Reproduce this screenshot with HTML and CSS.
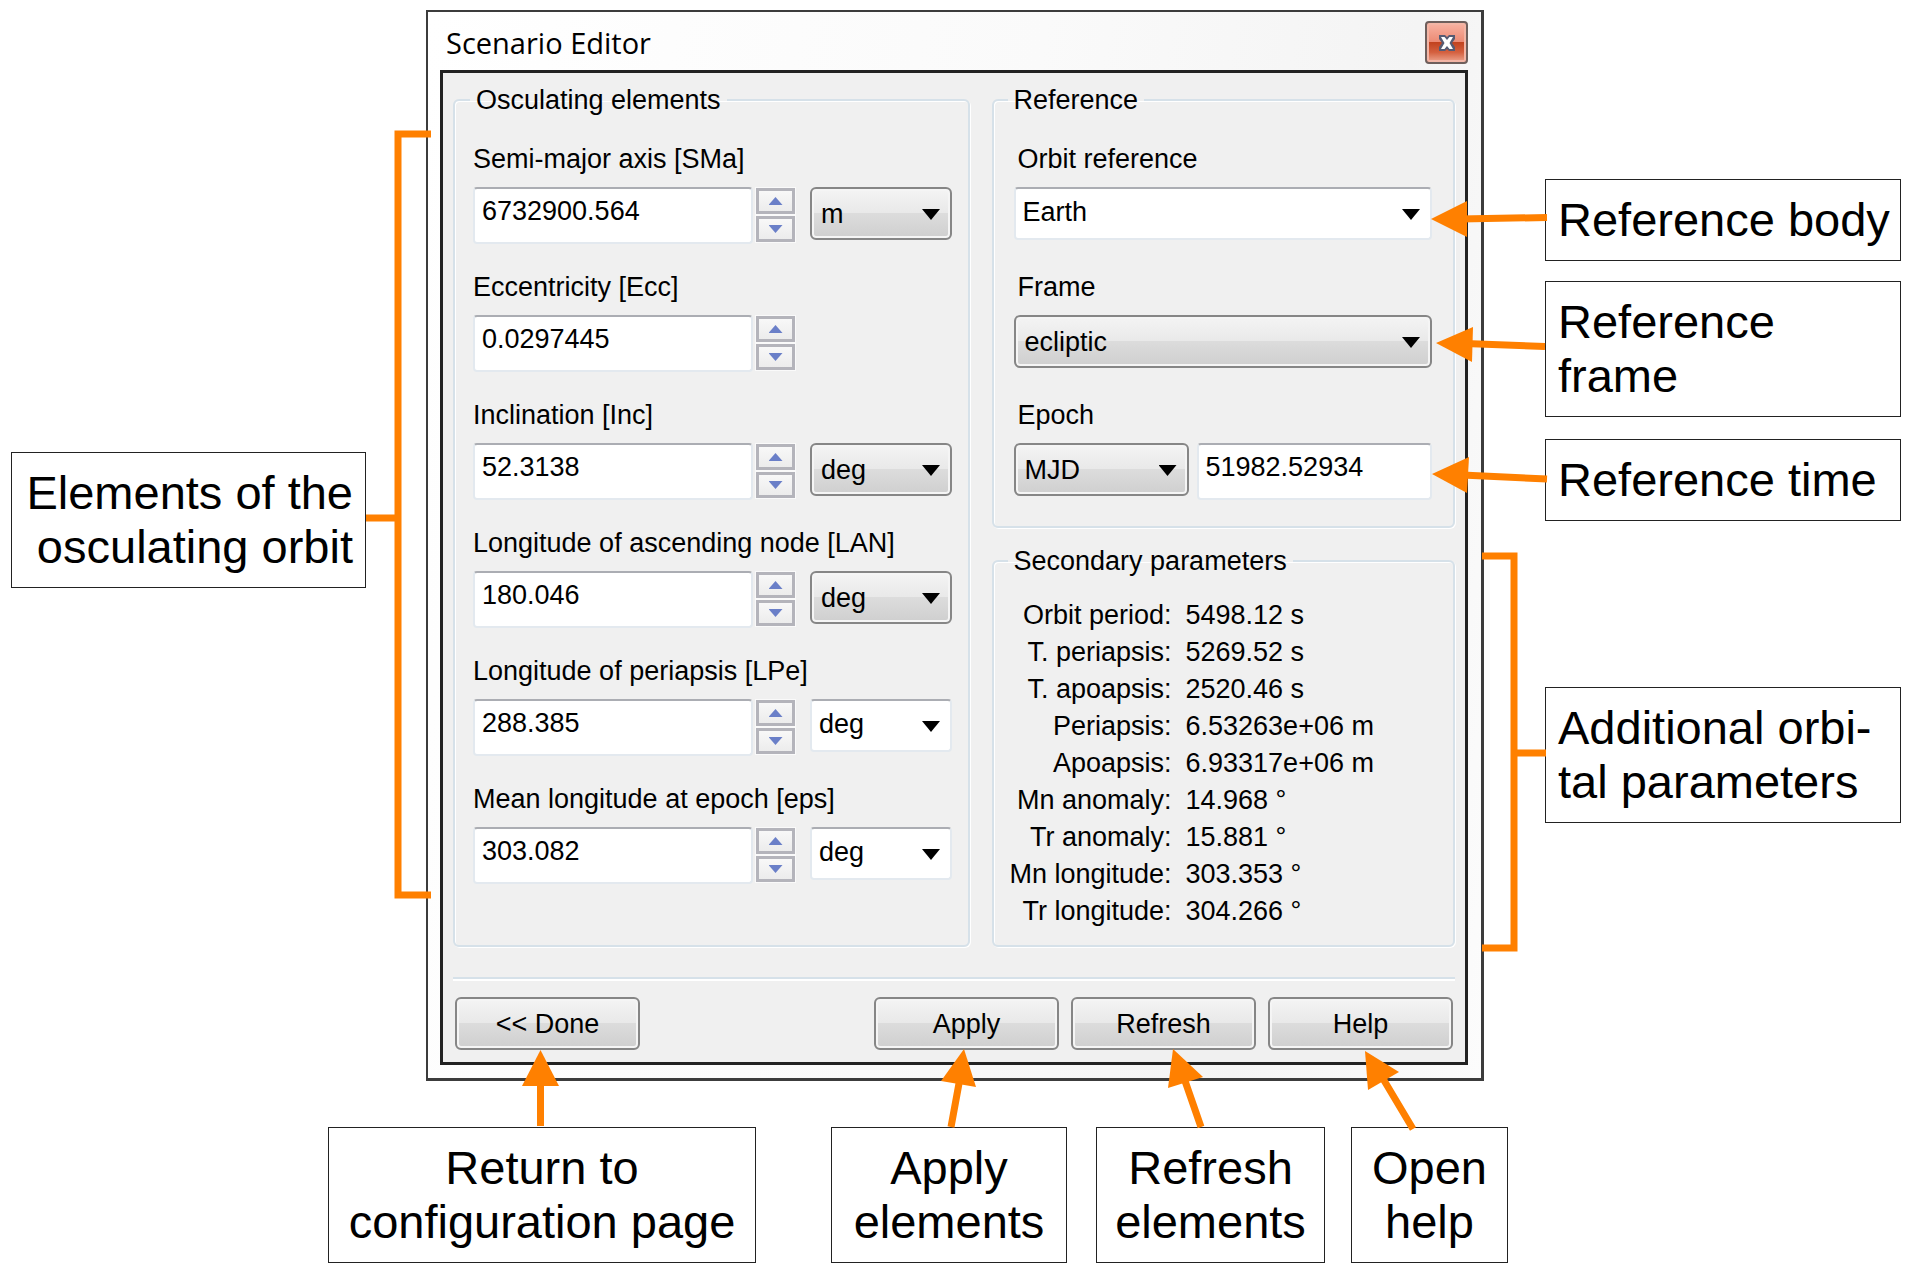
FILE: index.html
```
<!DOCTYPE html>
<html lang="en">
<head>
<meta charset="utf-8">
<title>Scenario Editor</title>
<link rel="stylesheet" href="styles.css">
</head>
<body>
<main class="figure">
  <div class="stage">
    <aside class="side side-left">
      <p class="callout callout-right">Elements of the osculating orbit</p>
    </aside>

    <section class="dialog" aria-labelledby="dialog-title">
      <header class="titlebar">
        <h1 class="title" id="dialog-title">Scenario Editor</h1>
        <button class="close" type="button" aria-label="Close">
          <svg width="20" height="18" viewBox="0 0 20 18" aria-hidden="true">
            <path d="M2 1H8L10 3L12 1H18V5L15 9L18 13V17H12L10 15L8 17H2V13L5 9L2 5Z" fill="#565b73"/>
            <path d="M4 3H7.500L10 6L12.500 3H16L12.500 9L16 15H12.500L10 12L7.500 15H4L7.500 9Z" fill="#fff"/>
          </svg>
        </button>
      </header>

      <form class="client">
        <div class="panels">
          <fieldset class="group group-elements">
            <legend>Osculating elements</legend>
            <div class="field">
              <label for="sma">Semi-major axis [SMa]</label>
              <div class="controls">
                <input class="text" id="sma" type="text" value="6732900.564">
                <span class="spin"><button type="button" aria-label="Increase SMa"><i class="up"></i></button><button type="button" aria-label="Decrease SMa"><i class="down"></i></button></span>
                <span class="combo"><select aria-label="SMa unit"><option>m</option></select></span>
              </div>
            </div>
            <div class="field">
              <label for="ecc">Eccentricity [Ecc]</label>
              <div class="controls">
                <input class="text" id="ecc" type="text" value="0.0297445">
                <span class="spin"><button type="button" aria-label="Increase Ecc"><i class="up"></i></button><button type="button" aria-label="Decrease Ecc"><i class="down"></i></button></span>
              </div>
            </div>
            <div class="field">
              <label for="inc">Inclination [Inc]</label>
              <div class="controls">
                <input class="text" id="inc" type="text" value="52.3138">
                <span class="spin"><button type="button" aria-label="Increase Inc"><i class="up"></i></button><button type="button" aria-label="Decrease Inc"><i class="down"></i></button></span>
                <span class="combo"><select aria-label="Inc unit"><option>deg</option></select></span>
              </div>
            </div>
            <div class="field">
              <label for="lan">Longitude of ascending node [LAN]</label>
              <div class="controls">
                <input class="text" id="lan" type="text" value="180.046">
                <span class="spin"><button type="button" aria-label="Increase LAN"><i class="up"></i></button><button type="button" aria-label="Decrease LAN"><i class="down"></i></button></span>
                <span class="combo"><select aria-label="LAN unit"><option>deg</option></select></span>
              </div>
            </div>
            <div class="field">
              <label for="lpe">Longitude of periapsis [LPe]</label>
              <div class="controls">
                <input class="text" id="lpe" type="text" value="288.385">
                <span class="spin"><button type="button" aria-label="Increase LPe"><i class="up"></i></button><button type="button" aria-label="Decrease LPe"><i class="down"></i></button></span>
                <span class="combo editable"><select aria-label="LPe unit"><option>deg</option></select></span>
              </div>
            </div>
            <div class="field">
              <label for="eps">Mean longitude at epoch [eps]</label>
              <div class="controls">
                <input class="text" id="eps" type="text" value="303.082">
                <span class="spin"><button type="button" aria-label="Increase eps"><i class="up"></i></button><button type="button" aria-label="Decrease eps"><i class="down"></i></button></span>
                <span class="combo editable"><select aria-label="eps unit"><option>deg</option></select></span>
              </div>
            </div>
          </fieldset>

          <div class="column">
            <fieldset class="group group-reference">
              <legend>Reference</legend>
              <div class="field">
                <label class="indent" for="orbit-reference">Orbit reference</label>
                <div class="controls">
                  <span class="combo wide editable"><select id="orbit-reference"><option>Earth</option></select></span>
                </div>
              </div>
              <div class="field">
                <label class="indent" for="frame">Frame</label>
                <div class="controls">
                  <span class="combo wide"><select id="frame"><option>ecliptic</option></select></span>
                </div>
              </div>
              <div class="field">
                <label class="indent" for="epoch">Epoch</label>
                <div class="controls epoch">
                  <span class="combo"><select aria-label="Epoch format"><option>MJD</option></select></span>
                  <input class="text" id="epoch" type="text" value="51982.52934">
                </div>
              </div>
            </fieldset>

            <fieldset class="group group-secondary">
              <legend>Secondary parameters</legend>
              <table class="params">
                <tbody>
                  <tr><th scope="row">Orbit period:</th><td>5498.12 s</td></tr>
                  <tr><th scope="row">T. periapsis:</th><td>5269.52 s</td></tr>
                  <tr><th scope="row">T. apoapsis:</th><td>2520.46 s</td></tr>
                  <tr><th scope="row">Periapsis:</th><td>6.53263e+06 m</td></tr>
                  <tr><th scope="row">Apoapsis:</th><td>6.93317e+06 m</td></tr>
                  <tr><th scope="row">Mn anomaly:</th><td>14.968 °</td></tr>
                  <tr><th scope="row">Tr anomaly:</th><td>15.881 °</td></tr>
                  <tr><th scope="row">Mn longitude:</th><td>303.353 °</td></tr>
                  <tr><th scope="row">Tr longitude:</th><td>304.266 °</td></tr>
                </tbody>
              </table>
            </fieldset>
          </div>
        </div>

        <hr class="rule">

        <div class="actions">
          <button class="push push-first" type="button">&lt;&lt; Done</button>
          <button class="push" type="button">Apply</button>
          <button class="push" type="button">Refresh</button>
          <button class="push" type="button">Help</button>
        </div>
      </form>
    </section>

    <aside class="side side-right">
      <p class="callout">Reference body</p>
      <p class="callout">Reference<br>frame</p>
      <p class="callout callout-time">Reference time</p>
      <p class="callout callout-params">Additional orbi-<br>tal parameters</p>
    </aside>
  </div>

  <div class="below">
    <p class="callout callout-center at-done">Return to<br>configuration page</p>
    <p class="callout callout-center at-apply">Apply elements</p>
    <p class="callout callout-center at-refresh">Refresh elements</p>
    <p class="callout callout-center at-help">Open help</p>
  </div>

  <!-- leader lines from the callouts to the parts of the dialog -->
  <svg class="leaders" viewBox="0 0 1911 1273" preserveAspectRatio="none" aria-hidden="true">
    <g fill="none" stroke="#ff8000" stroke-width="7">
      <path d="M431 134H398V895H431M366 518H398"/>
      <path d="M1482 556H1514V948H1482M1514 753H1546"/>
      <path d="M1460 219L1547 217.500M1465 343.500L1545 346.500M1462 475L1547 479"/>
      <path d="M540.500 1080V1126M960 1078L951 1127M1184 1078L1201 1127M1382 1077L1413 1129"/>
    </g>
    <g fill="#ff8000">
      <path d="M1431 219L1467 201V237Z"/>
      <path d="M1436 343L1473 327L1472 362Z"/>
      <path d="M1432 474L1469 457L1467 493Z"/>
      <path d="M540.500 1050L559 1086H522Z"/>
      <path d="M964 1049L976 1087L941 1081Z"/>
      <path d="M1173 1049L1203 1077L1168 1088Z"/>
      <path d="M1365 1051L1399 1072L1368 1090Z"/>
    </g>
  </svg>
</main>
</body>
</html>
```
FILE: styles.css
```
* {
  box-sizing: border-box;
}

body {
  margin: 0;
  background: #fff;
  color: #000;
  font-family: "Liberation Sans", Arial, sans-serif;
}

.figure {
  position: relative;
  padding: 10px 0;
}

.leaders {
  position: absolute;
  inset: 0;
  width: 100%;
  height: 100%;
  pointer-events: none;
}

/* columns: margin, callout, gap, dialog, gap, callout, margin */
.stage {
  display: grid;
  grid-template-columns: 11fr 355fr 60fr 1058fr 61fr minmax(0, 356fr) 10fr;
  align-items: start;
}

.side {
  display: flex;
  flex-direction: column;
}

.side-left {
  grid-column: 2;
  padding-top: 442px;
}

.side-right {
  grid-column: 6;
  padding-top: 169px;
  gap: 20px;
  white-space: nowrap;
}

.below {
  display: grid;
  grid-template-columns: 328fr 428fr 75fr 236fr 29fr 229fr 26fr 157fr 403fr;
  margin-top: 46px;
}

.at-done { grid-column: 2; }
.at-apply { grid-column: 4; }
.at-refresh { grid-column: 6; }
.at-help { grid-column: 8; }

.callout {
  margin: 0;
  padding: 13px 12px;
  border: 1px solid #222;
  background: #fff;
  font-size: 47px;
  line-height: 54px;
}

.callout-right {
  text-align: right;
}

.callout-center {
  text-align: center;
}

.callout-time {
  margin-top: 2px;
}

.callout-params {
  margin-top: 146px;
}

/* dialog window */
.dialog {
  grid-column: 4;
  padding: 0 13px 13px 12px;
  border: 2px solid #3c3c3c;
  border-right-width: 3px;
  border-bottom-width: 3px;
  background: linear-gradient(100deg, #fff 0, #fafafa 50%, #f4f4f4 80%, #fcfcfc 100%);
  font-size: 27px;
  line-height: 32px;
}

.titlebar {
  display: flex;
  justify-content: space-between;
  align-items: center;
  height: 58px;
  padding: 3px 0 0 6px;
}

.title {
  margin: 0;
  font-family: "Open Sans", "Noto Sans", sans-serif;
  font-size: 29px;
  font-weight: 400;
  line-height: 40px;
}

.close {
  display: grid;
  place-items: center;
  width: 43px;
  height: 43px;
  padding: 0;
  border: 2px solid #6e5f5c;
  border-radius: 4px;
  background: linear-gradient(#f9b3a3 0, #ec8b75 48%, #c2431f 50%, #d4603f 75%, #eda58f 100%);
  box-shadow: inset 0 0 0 2px #f3b5a5;
}

.client {
  padding: 11px 10px 12px;
  border: 3px solid #222;
  background: #f0f0f0;
}

.panels {
  display: grid;
  grid-template-columns: minmax(0, 516fr) minmax(0, 463fr);
  gap: 22px;
}

.column {
  display: flex;
  flex-direction: column;
  gap: 17px;
}

.group {
  min-width: 0;
  margin: 0;
  border: 2px solid #d6e1e9;
  border-radius: 6px;
  box-shadow: 1px 1px 0 #fff, inset 1px 1px 0 #fff;
}

.group legend {
  padding: 0 6px;
}

.group-elements {
  padding: 27px 15px 28px 18px;
}

.group-elements legend {
  margin-left: -3px;
}

.group-reference {
  padding: 27px 21px 26px 20px;
}

.group-secondary {
  padding: 20px 14px 15px;
}

.group-reference legend {
  margin-left: -6px;
}

.field {
  display: flex;
  flex-direction: column;
  gap: 12px;
}

.field + .field {
  margin-top: 27px;
}

.field .indent {
  padding-left: 4px;
}

.controls {
  display: flex;
  align-items: flex-start;
  height: 57px;
}

.text,
.combo select {
  font: inherit;
  color: #000;
}

.text {
  flex: 0 1 280px;
  min-width: 0;
  height: 57px;
  padding: 6px 7px 15px;
  border: 2px solid #e3e9ef;
  border-top-color: #abadb3;
  border-radius: 4px;
  background: #fff;
}

.spin {
  display: flex;
  flex-direction: column;
  gap: 2px;
  padding: 1px;
  margin: 0 14px 0 2px;
  background: #fafafa;
}

.spin button {
  display: grid;
  place-items: center;
  width: 39px;
  height: 26px;
  padding: 0;
  border: 3px solid #b4b4bb;
  background: linear-gradient(#f8f8f8, #ececec);
}

.up,
.down {
  width: 14px;
  height: 8px;
  background: #6a7fc8;
}

.up { clip-path: polygon(50% 0, 100% 100%, 0 100%); }
.down { clip-path: polygon(0 0, 100% 0, 50% 100%); }

.combo {
  position: relative;
  flex: 0 0 142px;
  height: 53px;
}

.combo.wide {
  flex: 1;
}

.epoch {
  gap: 8px;
}

.epoch .combo {
  flex: 0 0 175px;
}

.epoch .text {
  flex: 1 1 0;
}

.combo::after {
  content: "";
  position: absolute;
  top: 22px;
  right: 12px;
  width: 18px;
  height: 11px;
  background: #000;
  clip-path: polygon(0 0, 100% 0, 50% 100%);
  pointer-events: none;
}

.combo select {
  appearance: none;
  width: 100%;
  height: 53px;
  padding: 0 36px 0 9px;
  border: 2px solid #868686;
  border-radius: 6px;
  background: linear-gradient(#f4f4f4 0, #e9e9e9 48%, #dcdcdc 50%, #cfcfcf 100%);
  box-shadow: inset 0 0 0 2px #f5f5f5;
}

.combo.editable select {
  padding: 0 36px 4px 7px;
  border-color: #abadb3 #e3e9ef #e3e9ef;
  border-radius: 4px;
  background: #fff;
  box-shadow: none;
}

.params {
  border-collapse: collapse;
}

.params th,
.params td {
  padding: 0;
  font-weight: 400;
  line-height: 37px;
  white-space: nowrap;
}

.params th {
  width: 164px;
  text-align: right;
}

.params td {
  padding-left: 14px;
}

.rule {
  height: 4px;
  margin: 30px 0 16px;
  border: 0;
  border-top: 2px solid #d6e1e9;
  background: #fff;
}

.actions {
  display: flex;
  gap: 12px;
  padding: 0 2px;
}

.push {
  width: 185px;
  height: 53px;
  padding: 0;
  border: 2px solid #868686;
  border-radius: 6px;
  background: linear-gradient(#f4f4f4 0, #e9e9e9 48%, #dcdcdc 50%, #cfcfcf 100%);
  box-shadow: inset 0 0 0 2px #f5f5f5;
  color: #000;
  font: inherit;
}

.push-first {
  margin-right: auto;
}
```
